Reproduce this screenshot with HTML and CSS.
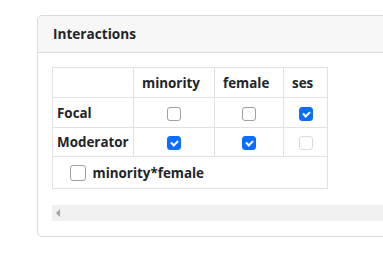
FILE: index.html
```html
<!DOCTYPE html>
<html lang="en">
<head>
    <meta charset="UTF-8">
    <title>Interactions</title>
    <link rel="stylesheet" href="styles.css">
</head>
<body>

<div class="card">
    <div class="card-header">Interactions</div>
    <div class="card-body">
        <table class="grid">
            <colgroup>
                <col class="c-label">
                <col class="c-min">
                <col class="c-fem">
                <col class="c-ses">
            </colgroup>
            <tr>
                <th></th>
                <th class="head">minority</th>
                <th class="head">female</th>
                <th class="head">ses</th>
            </tr>
            <tr>
                <th>Focal</th>
                <td><span class="box"></span></td>
                <td><span class="box"></span></td>
                <td><span class="box checked"></span></td>
            </tr>
            <tr>
                <th>Moderator</th>
                <td><span class="box checked"></span></td>
                <td><span class="box checked"></span></td>
                <td><span class="box disabled"></span></td>
            </tr>
            <tr>
                <td colspan="4" class="term">
                    <span class="box big"></span>
                    <span>minority*female</span>
                </td>
            </tr>
        </table>
        <div class="hscroll"><span class="arrow"></span></div>
    </div>
</div>

</body>
</html>
```

FILE: styles.css
```css
body {
    font-family: "Open Sans", Arial, sans-serif;
    margin: 0;
    padding: 15px 0 0 37px;
    overflow: hidden;
    color: #212529;
    background: #fff;
}

.card {
    width: 420px;
    border: 1px solid #dcdcdc;
    border-radius: 5px;
}

.card-header {
    background-color: #f7f7f7;
    border-bottom: 1px solid #dcdcdc;
    border-radius: 5px 5px 0 0;
    height: 36px;
    line-height: 36px;
    padding-left: 15px;
    font-size: 13.6px;
    font-weight: bold;
}

.card-body {
    padding: 14px 14px 15px;
}

.grid {
    border-collapse: collapse;
    table-layout: fixed;
    width: 275px;
    font-size: 13.4px;
    font-weight: bold;
}

.c-label { width: 81px; }
.c-min { width: 81px; }
.c-fem { width: 69px; }
.c-ses { width: 44px; }

.grid th, .grid td {
    border: 1px solid #dee2e6;
    padding: 0 4px;
    text-align: left;
    white-space: nowrap;
}

.grid th.head {
    padding-left: 8px;
}

.grid td {
    text-align: center;
}

.grid tr {
    height: 30px;
}

.grid tr:nth-child(3) {
    height: 29px;
}

.grid tr:last-child {
    height: 32px;
}

.grid td.term {
    text-align: left;
    padding-left: 17px;
}

.term span {
    vertical-align: middle;
}

.box {
    display: inline-block;
    width: 12px;
    height: 12px;
    border: 1px solid #a0a0a0;
    border-radius: 3px;
    vertical-align: middle;
    position: relative;
}

.box.big {
    width: 14px;
    height: 14px;
    margin-right: 3px;
}

.box.checked {
    background: #0d6efd;
    border-color: #0d6efd;
}

.box.checked::after {
    content: "";
    position: absolute;
    left: 4px;
    top: 2px;
    width: 3px;
    height: 5px;
    border: solid #fff;
    border-width: 0 2px 2px 0;
    transform: rotate(45deg);
}

.box.disabled {
    border-color: #dadada;
}

.hscroll {
    margin-top: 16px;
    height: 16px;
    background: #f0f0f0;
    position: relative;
}

.arrow {
    position: absolute;
    left: 4px;
    top: 4px;
    border-style: solid;
    border-width: 4px 4px 4px 0;
    border-color: transparent #a3a3a3 transparent transparent;
}
```
